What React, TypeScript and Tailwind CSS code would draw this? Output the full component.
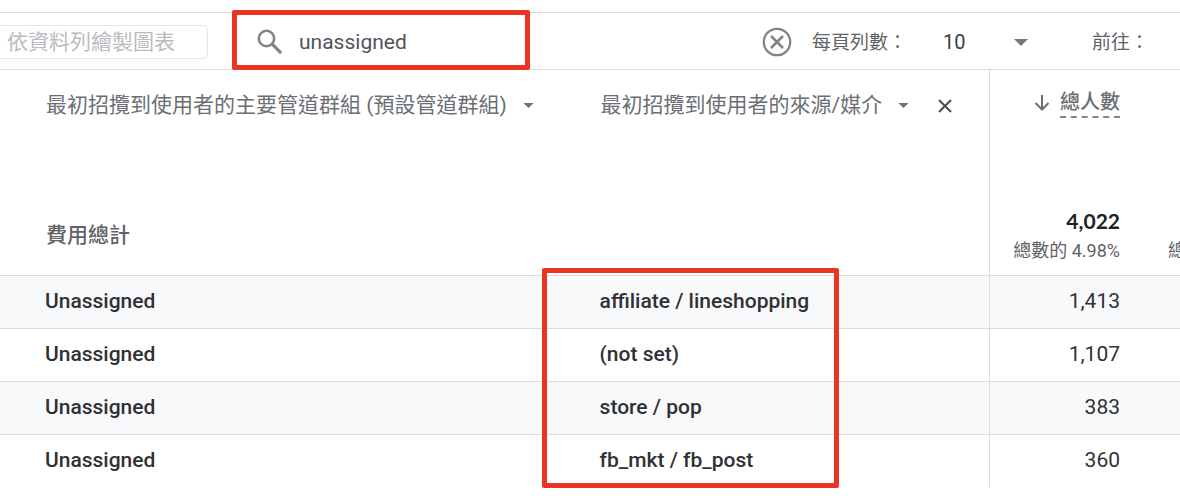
import clsx from "clsx";

const rows = [
	{ channel: "Unassigned", source: "affiliate / lineshopping", users: "1,413" },
	{ channel: "Unassigned", source: "(not set)", users: "1,107" },
	{ channel: "Unassigned", source: "store / pop", users: "383" },
	{ channel: "Unassigned", source: "fb_mkt / fb_post", users: "360" },
];

function Caret({ className }: { className?: string }) {
	return (
		<svg
			viewBox="0 0 14 7"
			className={clsx("shrink-0 fill-current", className)}
			aria-hidden="true"
		>
			<path d="M0 0h14L7 7z" />
		</svg>
	);
}

function Highlight({ className }: { className?: string }) {
	return (
		<span
			aria-hidden="true"
			className={clsx(
				"pointer-events-none absolute z-10 rounded-xs border-5 border-[#eb3323]",
				className,
			)}
		/>
	);
}

function Toolbar() {
	return (
		<div className="flex h-[58px] border-y border-[#dadce0] text-[19px]">
			<div className="flex w-[232px] shrink-0 items-center pt-0.5">
				<button
					type="button"
					disabled
					className="h-[34px] w-[208px] rounded-r-md border border-l-0 border-[#e4e5e7] pl-[7px] text-left text-[21px] leading-8 text-[#b9bbbe]"
				>
					依資料列繪製圖表
				</button>
			</div>
			<div className="relative flex min-w-0 flex-1 items-center border-l border-[#dadce0] pt-0.5 pl-6">
				<svg
					viewBox="0 0 26 26"
					className="size-[26px] shrink-0 fill-none stroke-[#80868b]"
					aria-hidden="true"
				>
					<circle cx="9.5" cy="9.5" r="7.7" strokeWidth="2.6" />
					<path d="M15.2 15.2l9 9" strokeWidth="3.2" />
				</svg>
				<input
					type="text"
					aria-label="搜尋"
					defaultValue="unassigned"
					className="ml-4 w-full min-w-0 pt-0.5 text-[21px] text-[#50545a] outline-none"
				/>
				<button type="button" aria-label="清除" className="shrink-0">
					<svg
						viewBox="0 0 30 30"
						className="size-[30px] fill-none stroke-[#80868b]"
						aria-hidden="true"
					>
						<circle cx="15" cy="15" r="13.2" strokeWidth="2.3" />
						<path d="M9 9l12 12M21 9L9 21" strokeWidth="2.6" />
					</svg>
				</button>
				<Highlight className="-top-[3px] -left-px h-[60px] w-[298px]" />
			</div>
			<div className="flex shrink-0 items-center pt-0.5 pl-5 text-[#5f6368]">
				<label htmlFor="page-size" className="pt-0.5">
					每頁列數：
				</label>
				<div className="relative ml-9 flex w-[85px] items-center">
					<select
						id="page-size"
						defaultValue="10"
						className="w-full appearance-none text-[20px] text-[#3c4043] outline-none"
					>
						<option>10</option>
						<option>25</option>
						<option>50</option>
					</select>
					<Caret className="pointer-events-none absolute right-0 h-[7px] w-[14px] text-[#74777b]" />
				</div>
				<span className="ml-16 w-[88px] pt-0.5">前往：</span>
			</div>
		</div>
	);
}

function ReportTable() {
	return (
		<table className="w-full table-fixed border-separate border-spacing-0 text-[21px]">
			<colgroup>
				<col className="w-[47%]" />
				<col />
				<col className="w-[155px]" />
				<col className="w-[36px]" />
			</colgroup>
			<thead className="align-top text-[#6b6f74]">
				<tr className="h-[121px]">
					<th className="pt-5 pl-[46px] text-left font-normal whitespace-nowrap">
						<button type="button" className="flex items-center gap-4">
							最初招攬到使用者的主要管道群組 (預設管道群組)
							<Caret className="h-[5px] w-[11px]" />
						</button>
					</th>
					<th className="pt-5 pl-[46px] text-left font-normal whitespace-nowrap">
						<div className="flex items-center">
							<button type="button" className="flex items-center gap-4">
								最初招攬到使用者的來源/媒介
								<Caret className="h-[5px] w-[11px]" />
							</button>
							<button type="button" aria-label="移除" className="ml-7">
								<svg
									viewBox="0 0 16 16"
									className="size-4 fill-none stroke-[#4a4d51] stroke-2"
									aria-hidden="true"
								>
									<path d="M2 2l12 12M14 2L2 14" />
								</svg>
							</button>
						</div>
					</th>
					<th className="border-l border-[#dadce0] pt-[18px] pr-6 font-medium">
						<button
							type="button"
							className="ml-auto flex items-center gap-2.5 text-[20px] leading-7"
						>
							<svg
								viewBox="0 0 16 18"
								className="h-[18px] w-4 fill-none stroke-current stroke-2"
								aria-hidden="true"
							>
								<path d="M8 1v14.5M1.5 9L8 15.5 14.5 9" />
							</svg>
							<span className="border-b-2 border-dashed border-[#80868b]">
								總人數
							</span>
						</button>
					</th>
					<th />
				</tr>
			</thead>
			<tbody className="font-medium text-[#303134]">
				<tr className="h-[84px] text-[#5f6368]">
					<td className="pt-1.5 pl-[46px]">費用總計</td>
					<td />
					<td className="border-l border-[#dadce0] pt-2 pr-6 text-right">
						<div className="font-[Lato] leading-7 font-bold text-[#202124]">
							4,022
						</div>
						<div className="text-[18px] leading-8 font-normal whitespace-nowrap">
							總數的 4.98%
						</div>
					</td>
					<td className="overflow-hidden pt-2">
						<div className="pt-7 pl-6 text-[18px] leading-8 font-normal whitespace-nowrap">
							總
						</div>
					</td>
				</tr>
				{rows.map((row, index) => (
					<tr
						key={row.source}
						className="h-[53px] *:border-t *:border-[#dadce0] odd:bg-white even:bg-[#f8f9fb]"
					>
						<td className="pl-[45px]">{row.channel}</td>
						<td className="relative pl-[45px]">
							{row.source}
							{index === 0 && (
								<Highlight className="-top-2 -left-[13px] h-[220px] w-[297px]" />
							)}
						</td>
						<td className="border-l pr-6 text-right font-normal">
							{row.users}
						</td>
						<td />
					</tr>
				))}
			</tbody>
		</table>
	);
}

export default function App() {
	return (
		<main
			lang="zh-Hant"
			className="overflow-hidden bg-white pt-3 pb-2 font-[Roboto,'Noto_Sans_CJK_TC',sans-serif]"
		>
			<Toolbar />
			<ReportTable />
		</main>
	);
}
